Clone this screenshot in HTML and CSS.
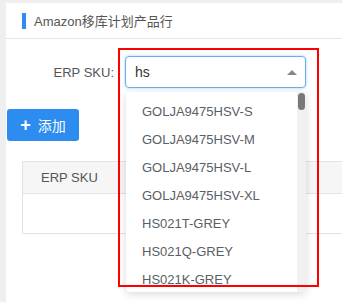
FILE: index.html
```html
<!doctype html>
<html lang="zh">
<head>
  <meta charset="UTF-8">
  <title>Amazon移库计划产品行</title>
  <link rel="stylesheet" href="styles.css">
</head>
<body>
  <div class="page">
    <div class="card">
      <div class="card-head">
        <span class="mark"></span>
        <span class="title">Amazon移库计划产品行</span>
      </div>
      <div class="card-body">
        <div class="form-row">
          <label class="form-label">ERP SKU:</label>
          <div class="select">
            <span class="select-value">hs</span>
            <span class="caret"></span>
            <div class="dropdown">
              <ul class="options">
                <li>GOLJA9475HSV-S</li>
                <li>GOLJA9475HSV-M</li>
                <li>GOLJA9475HSV-L</li>
                <li>GOLJA9475HSV-XL</li>
                <li>HS021T-GREY</li>
                <li>HS021Q-GREY</li>
                <li>HS021K-GREY</li>
              </ul>
              <div class="scroll-track"><div class="scroll-thumb"></div></div>
            </div>
          </div>
        </div>
        <button class="btn-add"><span class="plus">+</span>添加</button>
        <table class="grid">
          <tr class="grid-head">
            <td>ERP SKU</td>
          </tr>
          <tr class="grid-row">
            <td></td>
          </tr>
        </table>
      </div>
    </div>
    <div class="highlight"></div>
  </div>
</body>
</html>
```

FILE: styles.css
```css
html, body{
  margin:0;
  padding:0;
}
body {
  background: #efefef;
  font-family: "Liberation Sans", "Noto Sans CJK SC", sans-serif;
  overflow: hidden;
}
.page {
  position: relative;
  width: 342px;
  height: 302px;
  padding: 3px 0 0 6px;
  box-sizing: border-box;
  overflow: hidden;
}
.card {
  background: #fff;
  width: 420px;
  height: 320px;
}
.card-head {
  height: 35px;
  border-bottom: 1px solid #e6e6e6;
  display: flex;
  align-items: center;
  padding-left: 16px;
  gap: 8px;
}
.mark {
  width: 4px;
  height: 16px;
  background: #2d8cf0;
}
.title {
  font-size: 13px;
  color: #555;
}
.card-body {
  padding-top: 17px;
}
.form-row {
  display: flex;
  align-items: center;
  gap: 11px;
}
.form-label {
  width: 108px;
  text-align: right;
  font-size: 13px;
  color: #555;
}
.select {
  position: relative;
  width: 181px;
  height: 32px;
  box-sizing: border-box;
  border: 1px solid #66afe9;
  border-radius: 4px;
  box-shadow: 0 0 3px rgba(102, 175, 233, .6);
  display: flex;
  align-items: center;
  padding-left: 9px;
}
.select-value {
  font-size: 14px;
  color: #333;
}
.caret {
  position: absolute;
  right: 8px;
  top: 13px;
  width: 0;
  height: 0;
  border-left: 5px solid transparent;
  border-right: 5px solid transparent;
  border-bottom: 5px solid #888;
}
.dropdown {
  position: absolute;
  top: 35px;
  left: 0;
  width: 180px;
  height: 200px;
  background: #fff;
  border-radius: 4px;
  box-shadow: 0 2px 8px rgba(0, 0, 0, .15);
  overflow: hidden;
  z-index: 2;
}
.options {
  list-style: none;
  margin: 0;
  padding: 6px 0 0 0;
}
.options li {
  height: 28px;
  line-height: 28px;
  padding-left: 16px;
  font-size: 13px;
  color: #5a5e66;
}
.scroll-track {
  position: absolute;
  top: 0;
  right: 0;
  width: 9px;
  height: 100%;
  background: #f1f1f1;
}
.scroll-thumb {
  margin: 1px 0 0 1px;
  width: 7px;
  height: 17px;
  border-radius: 4px;
  background: #787878;
}
.btn-add {
  margin: 21px 0 0 1px;
  width: 72px;
  height: 32px;
  border: 0;
  border-radius: 3px;
  background: #2d8cf0;
  color: #fff;
  font-family: "Liberation Sans", "Noto Sans CJK SC", sans-serif;
  font-size: 14px;
  display: flex;
  align-items: center;
  justify-content: center;
  gap: 7px;
  padding: 0;
}
.plus {
  font-size: 18px;
  font-weight: bold;
  line-height: 1;
}
.grid {
  margin: 20px 0 0 16px;
  width: 380px;
  border-collapse: collapse;
}
.grid td {
  border: 1px solid #e3e3e3;
  padding: 0 0 0 18px;
  font-size: 13px;
  color: #555;
}
.grid-head td {
  height: 31px;
  background: #f6f6f6;
}
.grid-row td {
  height: 39px;
}
.highlight {
  position: absolute;
  left: 118px;
  top: 48px;
  width: 201px;
  height: 239px;
  box-sizing: border-box;
  border: 2px solid #f00;
  z-index: 3;
}
```
